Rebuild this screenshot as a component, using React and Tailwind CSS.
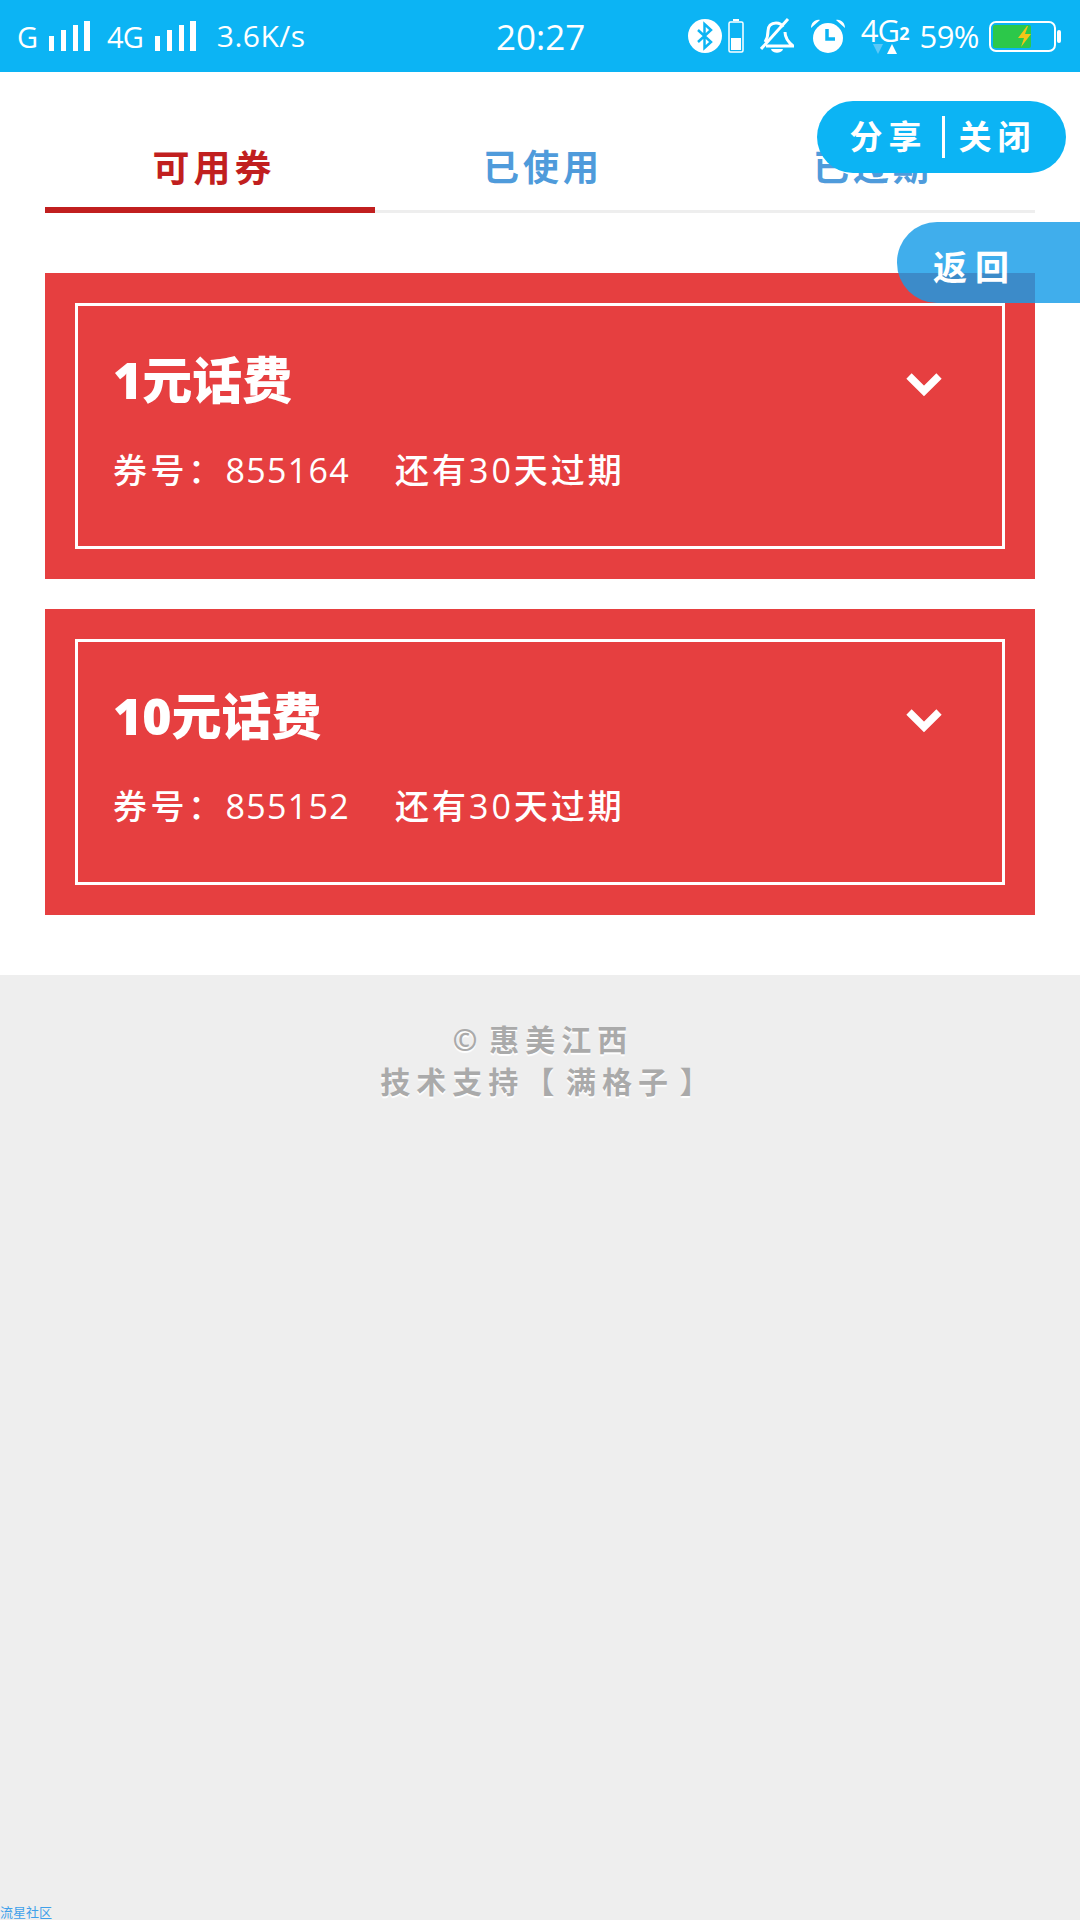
import React from "react";

const Signal = () => (
  <svg width="41" height="30" viewBox="0 0 41 30" fill="#fff">
    <rect x="0" y="15" width="5" height="15" />
    <rect x="12" y="9" width="5" height="21" />
    <rect x="24" y="4" width="5" height="26" />
    <rect x="35" y="0" width="6" height="30" />
  </svg>
);

const Bluetooth = () => (
  <svg width="34" height="34" viewBox="0 0 34 34">
    <circle cx="17" cy="17" r="17" fill="#fff" />
    <path d="M10 11l13 12-6.500 6V5l6.500 6-13 12" fill="none" stroke="#0cb4f4" strokeWidth="2.500" />
  </svg>
);

const SmallBattery = () => (
  <svg width="16" height="34" viewBox="0 0 16 34">
    <rect x="5" y="0" width="6" height="2" fill="#fff" />
    <rect x="1" y="3" width="14" height="30" rx="1.500" fill="none" stroke="#fff" strokeWidth="1.500" />
    <rect x="3" y="19" width="10" height="12" fill="#fff" />
  </svg>
);

const BellOff = () => (
  <svg width="34" height="36" viewBox="0 0 34 36" fill="none" stroke="#fff" strokeWidth="3">
    <path d="M5 24c2-3 3-6 3-11 0-5 3-8 8-8 4 0 6 2 7 4" />
    <path d="M25 14c0 5 2 9 8 14H6" />
    <path d="M1 31L28 1" />
    <path d="M11 31c1 5 11 5 12 0z" fill="#fff" stroke="none" />
  </svg>
);

const Alarm = () => (
  <svg width="34" height="34" viewBox="0 0 34 34">
    <circle cx="17" cy="19" r="15" fill="#fff" />
    <path d="M0 9c0-5 4-9 9-8z M34 9c0-5-4-9-9-8z" fill="#fff" />
    <path d="M16 10v10h8" fill="none" stroke="#0cb4f4" strokeWidth="3.500" />
  </svg>
);

const ChargeBattery = () => (
  <svg width="73" height="31" viewBox="0 0 73 31">
    <rect x="1" y="1" width="65" height="29" rx="6" fill="none" stroke="#fff" strokeWidth="2" />
    <rect x="4" y="4" width="38" height="23" rx="2" fill="#2cc84a" />
    <rect x="68" y="9" width="4" height="13" rx="2" fill="#fff" />
    <path d="M38 5l-9 12h6l-3 9 10-13h-6l3-8z" fill="#f5c518" />
  </svg>
);

const Chevron = () => (
  <svg width="36" height="26" viewBox="0 0 36 26" fill="none" stroke="#fff" strokeWidth="7.500">
    <path d="M3 5l15 15L33 5" />
  </svg>
);

const StatusBar = () => (
  <div className="h-[72px] bg-[#0cb4f4] text-white flex items-center pl-[17px] pr-[18px] shrink-0">
    <div className="w-[479px] flex items-center">
      <span className="text-[29px] leading-none">G</span>
      <span className="ml-[11px]"><Signal /></span>
      <span className="ml-[17px] text-[29px] leading-none tracking-[-1px]">4G</span>
      <span className="ml-[12px]"><Signal /></span>
      <span className="ml-[21px] text-[30px] leading-none tracking-[0.5px]">3.6K/s</span>
    </div>
    <span className="text-[35px] leading-none">20:27</span>
    <div className="ml-auto flex items-center">
      <Bluetooth />
      <span className="ml-[6px]"><SmallBattery /></span>
      <span className="ml-[16px]"><BellOff /></span>
      <span className="ml-[17px]"><Alarm /></span>
      <div className="ml-[16px] flex flex-col items-start">
        <div className="flex items-end leading-none">
          <span className="text-[31px] leading-[26px] tracking-[-1px]">4G</span>
          <span className="text-[18px] leading-[20px] font-bold">2</span>
        </div>
        <svg className="ml-[12px] mt-[1px]" width="24" height="11" viewBox="0 0 24 11">
          <path d="M0 0h10L5 10z" fill="#5cc8f8" />
          <path d="M14 10h10L19 0z" fill="#fff" />
        </svg>
      </div>
      <span className="ml-[10px] text-[31px] leading-none tracking-[-0.5px]">59%</span>
      <span className="ml-[10px]"><ChargeBattery /></span>
    </div>
  </div>
);

const tabs = [
  { label: "可用券", active: true },
  { label: "已使用" },
  { label: "已过期" },
];

const Tabs = () => (
  <div className="mx-[45px] mt-[33px] grid grid-cols-3 border-b-[3px] border-[#eeeeee]">
    {tabs.map((t) => (
      <div
        key={t.label}
        className={`h-[108px] -mb-[3px] pt-[24px] flex items-center justify-center font-bold tracking-[4px] border-b-[6px] ${
          t.active
            ? "pl-[8px] text-[37px] text-[#c11f1f] border-[#c11f1f]"
            : "pl-[6px] text-[36px] text-[#4f9bdb] border-transparent"
        }`}
      >
        {t.label}
      </div>
    ))}
  </div>
);

const coupons = [
  { title: "1元话费", no: "855164" },
  { title: "10元话费", no: "855152" },
];

const Coupon = ({ title, no }) => (
  <div className="bg-[#e63f40] p-[30px] text-white">
    <div className="border-[3px] border-white h-[246px] pl-[35px] pr-[60px] pt-[44px]">
      <div className="flex items-center justify-between h-[60px]">
        <span className="text-[50px] leading-[60px] font-black">{title}</span>
        <span className="mt-[7px]"><Chevron /></span>
      </div>
      <div className="mt-[35px] text-[34px] leading-[50px] whitespace-nowrap font-medium">
        <span className="tracking-[3.5px]">券号：</span>
        <span className="tracking-[1.3px]">{no}</span>
        <span className="ml-[45px] tracking-[3px]">还有30天过期</span>
      </div>
    </div>
  </div>
);

const Footer = () => (
  <div className="flex-1 bg-[#eeeeee] flex flex-col">
    <div className="pt-[44px] text-center text-[30px] leading-[42px] font-bold tracking-[6px] [word-spacing:-8px] text-[#aaaaaa] [text-shadow:0_2px_1px_#ffffff]">
      <div className="pl-[6px]">© 惠美江西</div>
      <div className="pl-[16px]">技术支持【 满格子 】</div>
    </div>
    <div className="mt-auto text-[13px] leading-[16px] text-[#3fa0ea]">流星社区</div>
  </div>
);

export default function App() {
  return (
    <div className="relative w-[1080px] h-[1920px] flex flex-col bg-white overflow-hidden font-['Open_Sans','Noto_Sans_CJK_SC',sans-serif]">
      <StatusBar />
      <Tabs />
      <div className="mx-[45px] mt-[60px] mb-[60px] flex flex-col gap-[30px]">
        {coupons.map((c) => (
          <Coupon key={c.no} {...c} />
        ))}
      </div>
      <Footer />

      {/* floating buttons */}
      <div className="absolute left-[817px] top-[101px] w-[249px] h-[72px] pl-[3px] rounded-full bg-[#0cb4f4] text-white text-[33px] font-bold flex items-center justify-center tracking-[6px]">
        <span>分享</span>
        <span className="mx-[14px] w-[3px] h-[42px] bg-white" />
        <span>关闭</span>
      </div>
      <div className="absolute left-[897px] top-[222px] w-[183px] h-[81px] pt-[9px] rounded-l-[40px] bg-[rgba(22,156,232,0.82)] text-white text-[34px] font-bold flex items-center pl-[36px] tracking-[8px]">
        返回
      </div>
    </div>
  );
}
